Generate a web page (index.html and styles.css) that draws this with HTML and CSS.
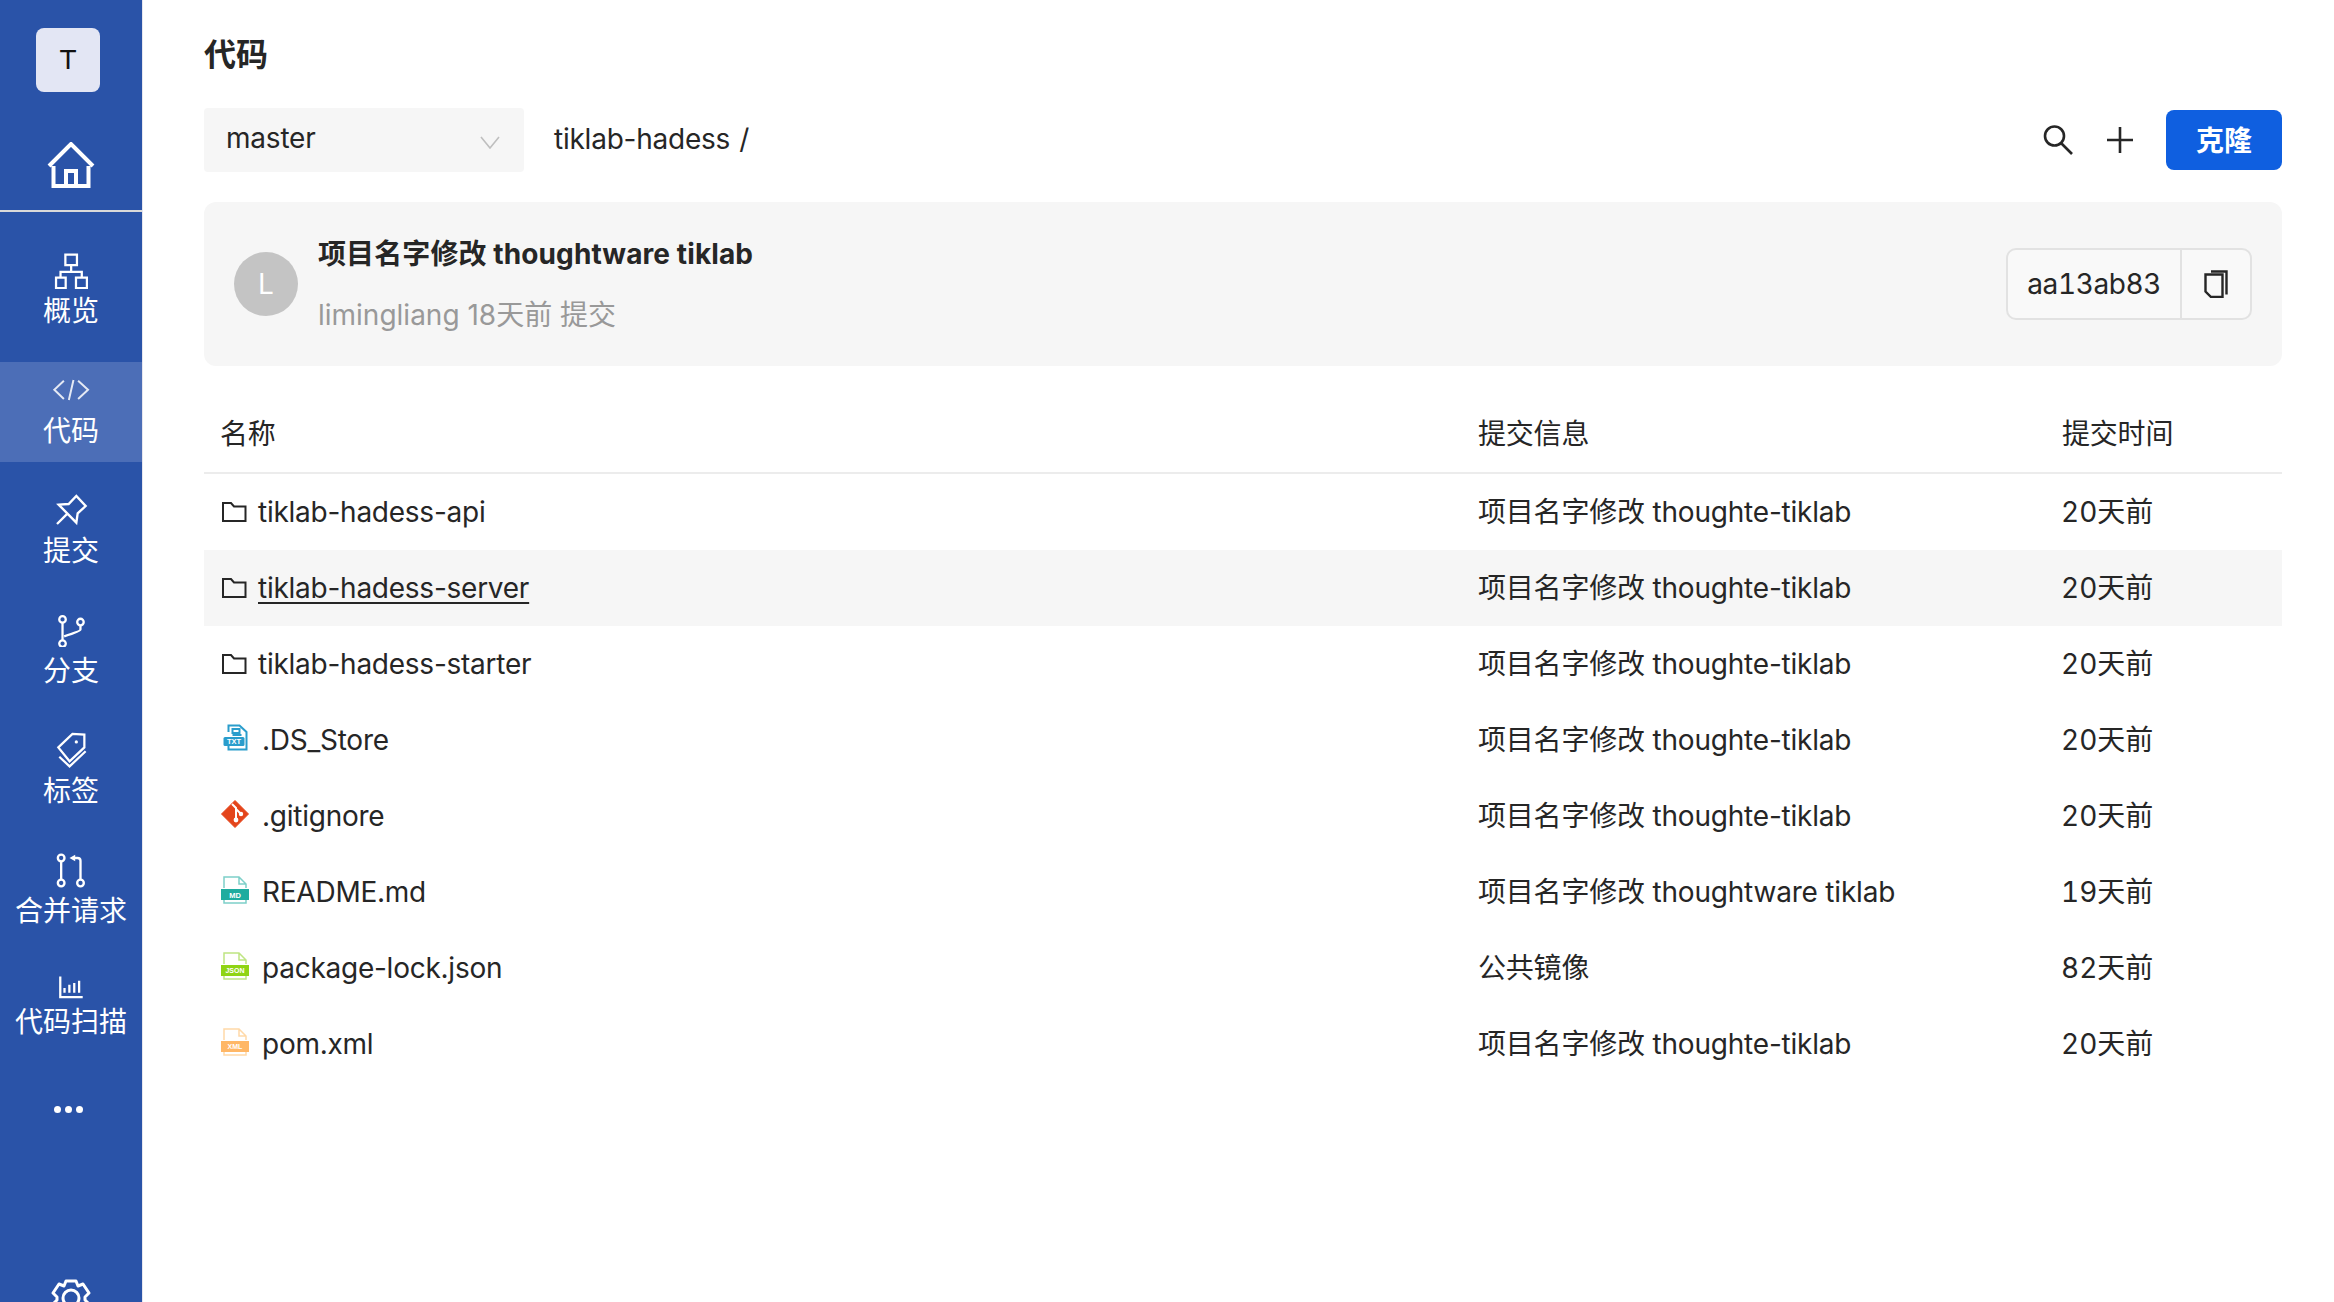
FILE: index.html
```html
<!DOCTYPE html>
<html lang="zh-CN">
<head>
<meta charset="utf-8">
<title>代码</title>
<link rel="stylesheet" href="styles.css">
</head>
<body>
<div class="app">
  <aside class="sidebar">
    <div class="avatar-t">T</div>
    <div class="home">
      <svg class="home-icon" viewBox="0 0 48 46"><path d="M2 24 L24 2 L46 24 M6.5 24 V44 H41.5 V24 M19 44 V29 H29 V44"/></svg>
    </div>
    <nav class="nav">
      <a class="nav-item"><span class="nav-icon"><svg width="34" height="37" viewBox="160 750 105 115"><path d="M195 758h36v33h-36zM213 791v20M180 830v-18h66v18M166 830h30v32h-30zM228 830h34v32h-34z"/></svg></span><span>概览</span></a>
      <a class="nav-item active"><span class="nav-icon"><svg width="38" height="24" viewBox="155 1135 115 70" class="soft"><path d="M191 1142 L162 1169 L191 1197M234 1142 L264 1169 L234 1197M220 1140 L206 1200"/></svg></span><span>代码</span></a>
      <a class="nav-item"><span class="nav-icon"><svg width="33" height="32" viewBox="165 42 97 96"><path d="M175 74 L205 72 L228 48 L256 78 L232 100 L228 128 Z M202 100 L170 132"/></svg></span><span>提交</span></a>
      <a class="nav-item"><span class="nav-icon"><svg width="30" height="33" viewBox="165 397 92 100"><circle cx="185" cy="413" r="10"/><circle cx="240" cy="421" r="10"/><circle cx="185" cy="487" r="10"/><path d="M185 423V477M240 431V444Q240 449 190 465"/></svg></span><span>分支</span></a>
      <a class="nav-item"><span class="nav-icon"><svg width="33" height="36" viewBox="163 752 100 112"><path d="M172 800 L216 758 L253 760 L253 800 L207 843 Z M175 829 L207 859 L257 812"/><circle class="dot" cx="228" cy="783" r="5"/></svg></span><span>标签</span></a>
      <a class="nav-item"><span class="nav-icon"><svg width="32" height="35" viewBox="165 1117 95 105"><circle cx="183" cy="1132" r="10"/><circle cx="183" cy="1207" r="10"/><circle cx="241" cy="1207" r="10"/><path d="M183 1142V1197M241 1197V1140Q241 1132 232 1132H218"/><path class="dot" d="M208 1132L225 1122V1142Z"/></svg></span><span>合并请求</span></a>
      <a class="nav-item scan"><span class="nav-icon"><svg width="26" height="24" viewBox="172 42 80 70"><path d="M179 45V108H248M192 80V95M207 70V95M222 65V95M237 58V95"/></svg></span><span>代码扫描</span></a>
    </nav>
    <div class="more"><i></i><i></i><i></i></div>
    <div class="settings">
      <svg width="40" height="40" viewBox="0 0 40 40"><path d="M15 3 H25 L27 8 L32 6 L38 15 L34 19 V22 L38 26 L32 35 L27 33 L25 38 H15 L13 33 L8 35 L2 26 L6 22 V19 L2 15 L8 6 L13 8 Z"/><circle cx="20" cy="20" r="8"/></svg>
    </div>
  </aside>
  <main class="main">
    <h1 class="title">代码</h1>
    <div class="toolbar">
      <div class="branch">
        <span>master</span>
        <svg width="20" height="13" viewBox="0 0 20 13"><path d="M1 1 L10 12 L19 1"/></svg>
      </div>
      <div class="path">tiklab-hadess<span class="slash">/</span></div>
      <div class="actions">
        <svg class="tool-icon" width="30" height="30" viewBox="0 0 30 30"><circle cx="11.5" cy="11" r="9.5"/><path d="M18 18 L29 29"/></svg>
        <svg class="tool-icon" width="30" height="30" viewBox="0 0 30 30"><path d="M15 2V28M2 15H28"/></svg>
        <button class="clone">克隆</button>
      </div>
    </div>
    <section class="commit">
      <div class="avatar-l">L</div>
      <div class="commit-text">
        <div class="commit-title">项目名字修改 thoughtware tiklab</div>
        <div class="commit-meta">limingliang 18天前 提交</div>
      </div>
      <div class="hash">
        <span class="hash-value">aa13ab83</span>
        <span class="hash-copy">
          <svg width="24" height="28" viewBox="0 0 24 28"><path d="M7 1.5 H22.5 V24.5 M1.5 4.5 H18.5 V27 H7 L1.5 21.5 Z"/></svg>
        </span>
      </div>
    </section>
    <div class="table">
      <div class="row head"><div>名称</div><div>提交信息</div><div>提交时间</div></div>
      <div class="row"><div class="name"><svg class="ico-folder" width="26" height="22" viewBox="0 0 26 22"><path d="M2 2 H10 L13 5.5 H24.5 V20 H2 Z"/></svg><span>tiklab-hadess-api</span></div><div>项目名字修改 thoughte-tiklab</div><div class="time">20天前</div></div>
      <div class="row hover"><div class="name"><svg class="ico-folder" width="26" height="22" viewBox="0 0 26 22"><path d="M2 2 H10 L13 5.5 H24.5 V20 H2 Z"/></svg><span class="link">tiklab-hadess-server</span></div><div>项目名字修改 thoughte-tiklab</div><div class="time">20天前</div></div>
      <div class="row"><div class="name"><svg class="ico-folder" width="26" height="22" viewBox="0 0 26 22"><path d="M2 2 H10 L13 5.5 H24.5 V20 H2 Z"/></svg><span>tiklab-hadess-starter</span></div><div>项目名字修改 thoughte-tiklab</div><div class="time">20天前</div></div>
      <div class="row"><div class="name"><svg class="ico-file" width="30" height="28" viewBox="-1.5 0 30 28"><path d="M7 8V1.5H18L25 8V25.5H7V21" fill="none" stroke="#2a9dcc" stroke-width="2"/><path d="M11 5H18V9H11ZM11 11H20" fill="none" stroke="#2a9dcc" stroke-width="2"/><rect x="2" y="13" width="21" height="9" rx="1.5" fill="#2a9dcc"/><text x="12.5" y="20.3" class="ft">TXT</text></svg><span>.DS_Store</span></div><div>项目名字修改 thoughte-tiklab</div><div class="time">20天前</div></div>
      <div class="row"><div class="name"><svg class="ico-file" width="30" height="28" viewBox="-1 0 30 28"><path d="M14 0.5 L27.5 14 L14 27.5 L0.5 14 Z" fill="#e4451b" stroke="#e4451b" stroke-linejoin="round" stroke-width="1"/><path d="M11 4 L15 8 V19 M15 9 L20 14" fill="none" stroke="#fff" stroke-width="2"/><circle cx="15" cy="20" r="2.4" fill="#fff"/><circle cx="20" cy="14" r="2.2" fill="#fff"/></svg><span>.gitignore</span></div><div>项目名字修改 thoughte-tiklab</div><div class="time">20天前</div></div>
      <div class="row"><div class="name"><svg class="ico-file" width="30" height="28" viewBox="0 0 30 28"><path d="M4 12V1H19L26 8V12M4 24V27H26V24M19 1V8H26" fill="none" stroke="#7ed0c9" stroke-width="1.5"/><rect x="1" y="13" width="28" height="11" fill="#1fac9f"/><text x="15" y="21.5" class="ft">MD</text></svg><span>README.md</span></div><div>项目名字修改 thoughtware tiklab</div><div class="time">19天前</div></div>
      <div class="row"><div class="name"><svg class="ico-file" width="30" height="28" viewBox="0 0 30 28"><path d="M4 12V1H19L26 8V12M4 24V27H26V24M19 1V8H26" fill="none" stroke="#bfe583" stroke-width="1.5"/><rect x="1" y="13" width="28" height="11" fill="#8fd414"/><text x="15" y="21.3" class="ft small">JSON</text></svg><span>package-lock.json</span></div><div>公共镜像</div><div class="time">82天前</div></div>
      <div class="row"><div class="name"><svg class="ico-file" width="30" height="28" viewBox="0 0 30 28"><path d="M4 12V1H19L26 8V12M4 24V27H26V24M19 1V8H26" fill="none" stroke="#ffd9a8" stroke-width="1.5"/><rect x="1" y="13" width="28" height="11" fill="#ffb766"/><text x="15" y="21.3" class="ft small">XML</text></svg><span>pom.xml</span></div><div>项目名字修改 thoughte-tiklab</div><div class="time">20天前</div></div>
    </div>
  </main>
</div>
</body>
</html>
```
FILE: styles.css
```css
* { box-sizing: border-box; }
html, body { margin: 0; height: 100%; overflow: hidden; background: #fff; }
body { font-family: Inter, "Noto Sans CJK SC", sans-serif; font-size: 28px; color: #262626; }
.app { display: flex; height: 1302px; overflow: hidden; }

.sidebar { flex: 0 0 143px; height: 1302px; overflow: hidden; background: #2a53a8; border-right: 1px solid #e6e6ee; color: #fff; display: flex; flex-direction: column; align-items: stretch; padding-top: 28px; }
.sidebar > * { flex: none; }
.avatar-t { width: 64px; height: 64px; margin-left: 36px; border-radius: 8px; background: #e3e6f4; color: #111; display: flex; align-items: center; justify-content: center; font: 28px "Liberation Sans", sans-serif; }
.home { height: 120px; border-bottom: 2px solid #d9d9d9; display: flex; justify-content: center; padding-top: 50px; }
.home-icon { width: 48px; height: 46px; fill: none; stroke: #fff; stroke-width: 4; }
.nav { margin-top: 30px; display: flex; flex-direction: column; gap: 20px; }
.nav-item { flex: none; height: 100px; display: flex; flex-direction: column; align-items: center; padding-top: 8px; line-height: 40px; font-size: 28px; color: #fff; }
.nav-item.active { background: #4c6eb7; }
.nav-item.scan { margin-top: -9px; }
.nav-item.scan .nav-icon { align-items: flex-end; padding-bottom: 3px; }
.nav-icon { height: 41px; padding-bottom: 1px; display: flex; align-items: center; justify-content: center; }
.nav-icon svg { fill: none; stroke: #fff; stroke-width: 7; display: block; }
.nav-icon svg .dot { fill: #fff; stroke: none; }
.nav-icon svg.soft { opacity: .85; stroke-width: 6; }
.more { display: flex; justify-content: center; gap: 4px; margin-top: 53px; padding-right: 6px; }
.more i { width: 7px; height: 7px; border-radius: 50%; background: #fff; }
.settings { display: flex; justify-content: center; margin-top: 165px; }
.settings svg { flex: none; fill: none; stroke: #fff; stroke-width: 3; stroke-linejoin: round; }

.main { flex: 1; min-width: 0; padding: 0 52px 0 61px; }
.title { margin: 0; height: 108px; font-size: 32px; font-weight: 700; line-height: 110px; color: #262626; }
.toolbar { display: flex; align-items: center; height: 64px; }
.branch { width: 320px; height: 64px; background: #f6f6f6; border-radius: 4px; display: flex; align-items: center; justify-content: space-between; padding: 0 24px 0 22px; letter-spacing: -.2px; line-height: 60px; }
.branch span { position: relative; top: -2px; }
.branch svg { fill: none; stroke: #bfbfbf; stroke-width: 1.6; margin-top: 4px; }
.path { margin-left: 30px; letter-spacing: -.23px; position: relative; top: -1px; }
.slash { margin-left: 9px; }
.actions { margin-left: auto; display: flex; align-items: center; gap: 32px; }
.tool-icon { fill: none; stroke: #262626; stroke-width: 2.6; }
.clone { width: 116px; height: 60px; margin-left: -1px; border: 0; border-radius: 8px; background: #0f5fe0; color: #fff; font: 700 28px Inter, "Noto Sans CJK SC", sans-serif; padding: 0 0 2px; }

.commit { margin-top: 30px; height: 164px; background: #f6f6f6; border-radius: 12px; display: flex; align-items: center; padding: 0 30px; }
.avatar-l { width: 64px; height: 64px; border-radius: 50%; background: #c4c4c4; color: #fff; display: flex; align-items: center; justify-content: center; font-size: 28px; }
.commit-text { margin-left: 20px; flex: 1; }
.commit-title { font-weight: 700; line-height: 40px; letter-spacing: .1px; position: relative; top: 1px; }
.commit-meta { margin-top: 22px; line-height: 40px; color: #999; }
.hash { display: flex; height: 72px; border: 2px solid #e2e2e2; border-radius: 10px; background: #f9f9f9; }
.hash-value { display: flex; align-items: center; padding: 0 19px; border-right: 2px solid #e2e2e2; font-variant-numeric: tabular-nums; letter-spacing: -.4px; }
.hash-copy { width: 68px; display: flex; align-items: center; justify-content: center; }
.hash-copy svg { fill: none; stroke: #262626; stroke-width: 2.4; }

.table { margin-top: 29px; }
.row { display: grid; grid-template-columns: 1258px 584px 236px; height: 76px; align-items: center; }
.row > div { padding-left: 16px; white-space: nowrap; letter-spacing: -.2px; line-height: 44px; }
.row > .time { font-variant-numeric: tabular-nums; letter-spacing: 0; padding-left: 15px; }
.row.head { height: 79px; border-bottom: 2px solid #ececec; }
.row.hover { background: #f6f6f6; }
.row > .name { display: flex; align-items: center; letter-spacing: -.25px; }
.ico-folder { margin-left: 1px; margin-right: 11px; fill: none; stroke: #262626; stroke-width: 2; flex: none; }
.ico-file { flex: none; margin-right: 12px; margin-top: -4px; }
.link { text-decoration: underline; text-underline-offset: 4px; text-decoration-thickness: 2px; }
.ft { font: 700 7.5px "Liberation Sans", sans-serif; fill: #fff; text-anchor: middle; letter-spacing: 0; }
.ft.small { font-size: 7px; }
```
